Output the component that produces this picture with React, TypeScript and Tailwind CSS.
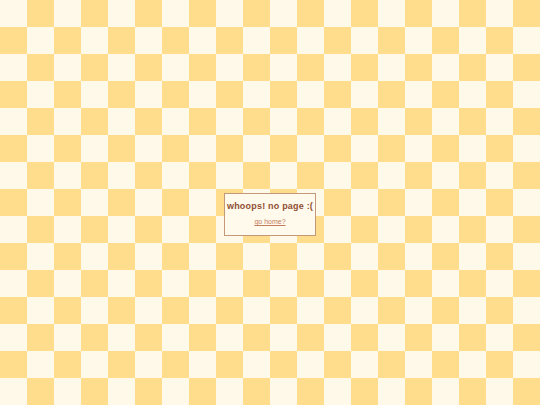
export default function App() {
  return (
    <div className="min-h-screen w-full bg-[#fff9ea] bg-[repeating-conic-gradient(#ffdd8c_0_25%,#fff9ea_0_50%)] bg-size-[54px_54px] flex items-center justify-center pt-6 font-['Liberation_Sans',sans-serif]">
      <div className="w-[92px] h-[43px] border border-[#c4997a] bg-[#fffaec] flex flex-col items-center pt-[5px]">
        <h1 className="whitespace-nowrap text-[9px] leading-[14px] font-bold tracking-[0.2px] text-[#8f4f33]">whoops! no page :(</h1>
        <a href="#" className="mt-[4px] whitespace-nowrap text-[7px] leading-[9px] text-[#c27c5e] underline">go home?</a>
      </div>
    </div>
  );
}
